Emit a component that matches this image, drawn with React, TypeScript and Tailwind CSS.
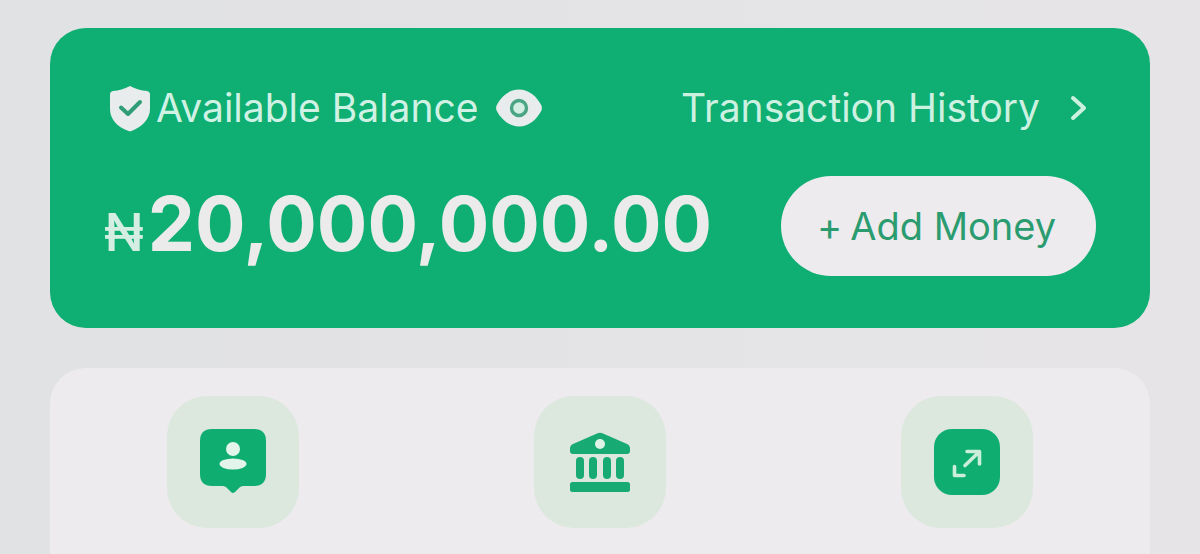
// src/features/wallet/WalletHome.tsx
import React from 'react';

const ShieldIcon: React.FC = () => (
  <svg className="h-12 w-11 shrink-0" viewBox="0 0 44 48" aria-hidden="true">
    <path
      d="M22 2 C28 5 33 6.500 39 7 Q42 7.500 42 10.500 V25 C42 35 34 43 23.500 47 Q22 47.600 20.500 47 C9 43 2 35 2 25 V10.500 Q2 7.500 5 7 C11 6.500 16 5 22 2Z"
      fill="#e9ecec"
    />
    <path d="M13 23.500 L20 30 L32 18" fill="none" stroke="#2f9e76" strokeWidth="4" strokeLinecap="round" strokeLinejoin="round" />
  </svg>
);

const EyeIcon: React.FC = () => (
  <svg className="h-10 w-12" viewBox="0 0 48 40" aria-hidden="true">
    <path
      d="M24 1.500 C34 1.500 41.500 8.500 46.200 17 Q47.600 20 46.200 23 C41.500 31.500 34 38.500 24 38.500 C14 38.500 6.500 31.500 1.800 23 Q.4 20 1.800 17 C6.500 8.500 14 1.500 24 1.500Z"
      fill="#e9ecec"
    />
    <circle cx="24" cy="20" r="7.500" fill="#d5eee4" stroke="#4aa585" strokeWidth="3.400" />
  </svg>
);

const ChevronIcon: React.FC = () => (
  <svg className="h-7 w-5" viewBox="0 0 20 28" aria-hidden="true">
    <path d="M5 4 L16 14 L5 24" fill="none" stroke="#cdf1e1" strokeWidth="4" strokeLinecap="round" strokeLinejoin="round" />
  </svg>
);

const ContactIcon: React.FC = () => (
  <svg className="h-[68px] w-[68px]" viewBox="0 0 68 68" aria-hidden="true">
    <path
      d="M13 1 H55 Q67 1 67 13 V46 Q67 58 55 58 H44 Q42 58 40.500 59.500 L36 64 Q34 66 32 64 L27.500 59.500 Q26 58 24 58 H13 Q1 58 1 46 V13 Q1 1 13 1Z"
      fill="#0fae70"
    />
    <circle cx="34" cy="21" r="7" fill="#e3f4ea" />
    <ellipse cx="34" cy="36" rx="13.500" ry="5.500" fill="#e3f4ea" />
  </svg>
);

const BankIcon: React.FC = () => (
  <svg className="h-[68px] w-[68px]" viewBox="0 0 68 68" aria-hidden="true">
    <g fill="#17aa72">
      <path d="M31 5.500 Q34 4 37 5.500 L61 16 Q64 17.500 64 20.500 V23 Q64 26 61 26 H7 Q4 26 4 23 V20.500 Q4 17.500 7 16Z" />
      <rect x="10" y="29" width="8" height="22" rx="4" />
      <rect x="23" y="29" width="8" height="22" rx="4" />
      <rect x="37" y="29" width="8" height="22" rx="4" />
      <rect x="50" y="29" width="8" height="22" rx="4" />
      <rect x="4" y="54" width="60" height="10" rx="2.500" />
    </g>
    <circle cx="34" cy="16" r="5" fill="#def3e7" />
  </svg>
);

const ExpandIcon: React.FC = () => (
  <svg className="h-[68px] w-[68px]" viewBox="0 0 68 68" aria-hidden="true">
    <rect x="1" y="1" width="66" height="66" rx="18" fill="#0fae70" />
    <path
      d="M34 23.500 H46.500 V36 M46 24 L32 37.500 M21.500 38.500 V47.500 H31"
      fill="none"
      stroke="#cbeedb"
      strokeWidth="3.600"
      strokeLinecap="round"
      strokeLinejoin="round"
    />
  </svg>
);

const actions = [
  { label: 'To contact', Icon: ContactIcon },
  { label: 'To bank', Icon: BankIcon },
  { label: 'Withdraw', Icon: ExpandIcon },
];

const App: React.FC = () => {
  return (
    <main className="min-h-screen overflow-hidden bg-linear-to-r from-[#e1e2e4] to-[#e6e4e7] px-[50px] pt-7 font-['Inter','Liberation_Sans',sans-serif]">
      {/* Balance card */}
      <section className="rounded-[36px] bg-[#0fae72] px-[54px] pt-14 pb-12">
        <div className="flex h-12 items-center justify-between">
          <div className="flex items-center pl-1">
            <ShieldIcon />
            <h2 className="ml-1 text-[39px] leading-12 text-[#d0f2e4]">Available Balance</h2>
            <button type="button" aria-label="Hide balance" className="ml-4">
              <EyeIcon />
            </button>
          </div>
          <a href="#history" className="flex items-center gap-7 pr-2 text-[39px] leading-12 text-[#cdf1e1]">
            Transaction History
            <ChevronIcon />
          </a>
        </div>

        <div className="mt-10 flex h-27 items-center justify-between">
          <p className="flex items-baseline pt-1 whitespace-nowrap text-[#ebebec]">
            <span className="text-[52px] leading-20 font-medium text-[#d5eee4]">₦</span>
            <span className="ml-1 text-[75px] leading-20 font-bold">20,000,000.00</span>
          </p>
          <button
            type="button"
            className="flex h-25 items-center gap-2 rounded-full bg-[#edebee] pr-10 pl-9 text-[38px] whitespace-nowrap text-[#2b9c70]"
          >
            <span>+</span>
            <span>Add Money</span>
          </button>
        </div>
      </section>

      {/* Quick actions */}
      <section className="mt-10 grid grid-cols-3 rounded-t-[36px] bg-[#eeebef] pt-7 pb-7">
        {actions.map(({ label, Icon }) => (
          <div key={label} className="flex justify-center">
            <button
              type="button"
              aria-label={label}
              className="flex h-[132px] w-[132px] items-center justify-center rounded-[40px] bg-[#dce8de]"
            >
              <Icon />
            </button>
          </div>
        ))}
      </section>
    </main>
  );
};

export default App;
